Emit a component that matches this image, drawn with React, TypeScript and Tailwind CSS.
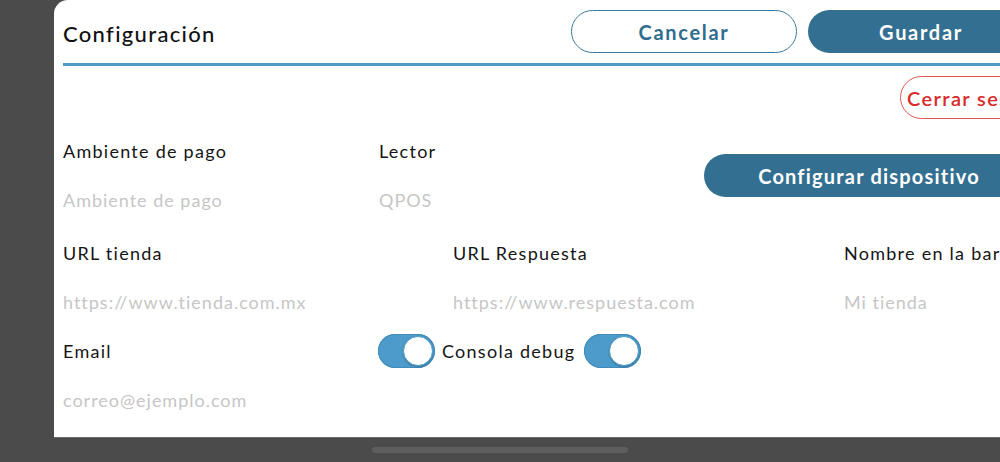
import React from "react";

function Toggle() {
  return (
    <div className="relative w-[57px] h-[34px] rounded-full bg-[#4d9bca] shadow-[inset_0_0_0_1px_#3f8bb9] shrink-0">
      <div className="absolute right-[2px] top-[2px] w-[30px] h-[30px] rounded-full bg-white border border-[#4d9bca] shadow-[0_1px_2px_rgba(0,0,0,0.25)]" />
    </div>
  );
}

function Field({ label, placeholder, w }: { label: string; placeholder: string; w: string }) {
  return (
    <div className={`flex flex-col ${w} shrink-0`}>
      <div className="text-[18px] leading-[24px] tracking-[0.07em] text-[#151515] whitespace-nowrap">{label}</div>
      <div className="mt-[25px] text-[18px] leading-[24px] tracking-[0.055em] text-[#c6c6c6] whitespace-nowrap">{placeholder}</div>
    </div>
  );
}

export default function App() {
  return (
    <div
      className="w-[1000px] h-[462px] bg-[#4b4b4b] overflow-hidden flex flex-col"
      style={{ fontFamily: "Lato, 'Noto Sans', sans-serif" }}
    >
      <div className="ml-[54px] h-[437px] bg-white rounded-tl-[14px] overflow-hidden shadow-[0_1px_0_#6a6a6a]">
        <div className="w-[971px] ml-[9px] flex flex-col">
          {/* header */}
          <div className="flex items-start pt-[10px]">
            <div className="mt-[10px] text-[22px] leading-[28px] font-medium tracking-[0.06em] text-[#111]">Configuración</div>
            <div className="ml-auto flex gap-[11px]">
              <button className="w-[226px] h-[43px] rounded-full border border-[#3c7a9c] text-[#2f6c8e] text-[20px] font-bold tracking-[0.085em]">
                Cancelar
              </button>
              <button className="w-[226px] h-[43px] rounded-full bg-[#336f91] text-white text-[20px] font-bold tracking-[0.085em]">
                Guardar
              </button>
            </div>
          </div>
          <div className="mt-[10px] h-[3px] bg-[#4f9bc7]" />
          {/* cerrar sesión */}
          <div className="mt-[10px] flex">
            <button className="ml-[837px] w-[226px] h-[43px] rounded-full border border-[#e05555] text-[#d92a2a] text-[20px] font-semibold tracking-[0.07em] text-left pl-[6px] shrink-0 whitespace-nowrap">
              Cerrar sesión
            </button>
          </div>
          {/* row 1 */}
          <div className="mt-[20px] flex items-start">
            <Field label="Ambiente de pago" placeholder="Ambiente de pago" w="w-[316px]" />
            <Field label="Lector" placeholder="QPOS" w="w-[325px]" />
            <button className="mt-[15px] w-[330px] h-[43px] rounded-full bg-[#336f91] text-white text-[20px] font-bold tracking-[0.06em] shrink-0">
              Configurar dispositivo
            </button>
          </div>
          {/* row 2 */}
          <div className="mt-[29px] flex items-start">
            <Field label="URL tienda" placeholder="https://www.tienda.com.mx" w="w-[390px]" />
            <Field label="URL Respuesta" placeholder="https://www.respuesta.com" w="w-[391px]" />
            <Field label="Nombre en la barra" placeholder="Mi tienda" w="w-[200px]" />
          </div>
          {/* row 3 */}
          <div className="mt-[25px] flex items-start">
            <Field label="Email" placeholder="correo@ejemplo.com" w="w-[315px]" />
            <div className="-mt-[5px] flex items-center">
              <Toggle />
              <span className="ml-[7px] mr-[9px] text-[18px] leading-[24px] tracking-[0.07em] text-[#151515] whitespace-nowrap">Consola debug</span>
              <Toggle />
            </div>
          </div>
        </div>
      </div>
      <div className="flex justify-center pt-[10px]">
        <div className="w-[256px] h-[6px] rounded-full bg-[#5e5e5e]" />
      </div>
    </div>
  );
}
